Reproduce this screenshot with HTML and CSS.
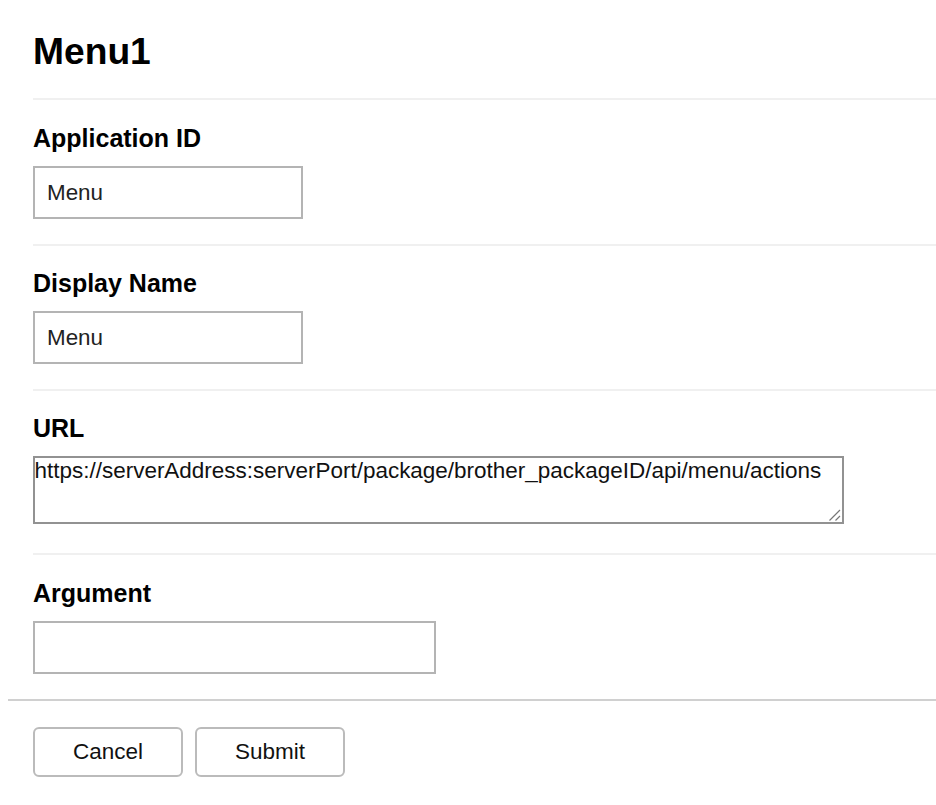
FILE: index.html
```html
<!DOCTYPE html>
<html lang="en">
<head>
<meta charset="utf-8">
<title>Menu1</title>
<link rel="stylesheet" href="styles.css">
</head>
<body>
<form class="page">
  <h1 class="title">Menu1</h1>
  <section class="field field-first">
    <label class="label" for="app">Application ID</label>
    <input class="input" id="app" type="text" value="Menu">
  </section>
  <section class="field">
    <label class="label" for="name">Display Name</label>
    <input class="input" id="name" type="text" value="Menu">
  </section>
  <section class="field field-url">
    <label class="label" for="url">URL</label>
    <div class="area">
      <textarea class="textarea" id="url">https://serverAddress:serverPort/package/brother_packageID/api/menu/actions</textarea>
      <svg class="grip" viewBox="0 0 12 12"><path d="M0.5 11.5L11 1M6.5 11.5L11 7"/></svg>
    </div>
  </section>
  <section class="field field-argument">
    <label class="label" for="arg">Argument</label>
    <input class="input input-wide" id="arg" type="text">
  </section>
  <footer class="footer">
    <button class="button" type="button">Cancel</button>
    <button class="button" type="button">Submit</button>
  </footer>
</form>
</body>
</html>
```
FILE: styles.css
```css
* { box-sizing: border-box; }
body {
  margin: 0;
  background: #fff;
  color: #000;
  font-family: "Liberation Sans", Arial, sans-serif;
  overflow: hidden;
}
.page { padding-left: 33px; }
.title {
  height: 98px;
  margin: 0;
  padding-top: 29px;
  font-size: 37.2px;
  line-height: 44px;
}
.field {
  height: 145px;
  padding-top: 21px;
  border-top: 2px solid #f0f0f0;
}
.field-first {
  height: 146px;
  padding-top: 22px;
}
.label {
  display: block;
  height: 44px;
  font-size: 25px;
  font-weight: bold;
  line-height: 32px;
}
.input {
  display: block;
  width: 270px;
  height: 53px;
  padding: 0 12px;
  border: 2px solid #b4b4b4;
  border-radius: 0;
  background: #fff;
  color: #222;
  font: 22.4px "Liberation Sans", Arial, sans-serif;
  outline: none;
}
.input-wide { width: 403px; }
.field-url { height: 164px; }
.area { position: relative; width: 811px; }
.textarea {
  display: block;
  width: 811px;
  height: 68px;
  padding: 0;
  border: 2px solid #929292;
  background: #fff;
  color: #111;
  font: 22.48px/26px "Liberation Sans", Arial, sans-serif;
  text-indent: -0.5px;
  resize: none;
  overflow: hidden;
  white-space: nowrap;
}
.grip {
  position: absolute;
  right: 3px;
  bottom: 3px;
  width: 12px;
  height: 12px;
  fill: none;
  stroke: #777;
  stroke-width: 1.2;
}
.field-argument {
  height: 146px;
  padding-top: 22px;
}
.footer {
  display: flex;
  gap: 12px;
  margin-left: -25px;
  padding: 26px 0 0 25px;
  border-top: 2px solid #d0d0d0;
}
.button {
  width: 150px;
  height: 50px;
  padding: 0;
  border: 2px solid #bbb;
  border-radius: 6px;
  background: #fff;
  color: #111;
  font: 22.5px "Liberation Sans", Arial, sans-serif;
}
```
